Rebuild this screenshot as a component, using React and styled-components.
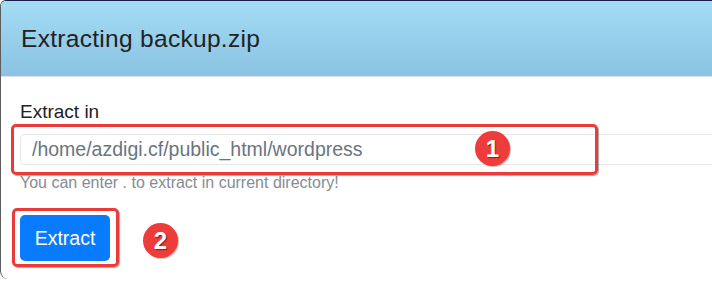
import React from 'react';
import styled, { createGlobalStyle } from 'styled-components';

const GlobalStyle = createGlobalStyle`
  html, body {
    margin: 0;
    padding: 0;
    background: #ffffff;
    overflow: hidden;
  }
  body {
    font-family: "Liberation Sans", Arial, sans-serif;
  }
`;

// the dialog runs off the right side of the capture, so no right border
const Modal = styled.div`
  box-sizing: border-box;
  width: 100%;
  height: 279px;
  background: #fff;
  border-top: 1px solid #1b1d4a;
  border-left: 1px solid #5c5c5c;
  border-radius: 6px 0 0 8px;
  overflow: hidden;
`;

const Header = styled.div`
  height: 75px;
  display: flex;
  align-items: center;
  padding-left: 20px;
  background: linear-gradient(180deg, #a4dcf5 0%, #8ac3e1 100%);
  border-bottom: 1px solid #dfe3e6;
`;

const Title = styled.h5`
  margin: 0;
  font-size: 24.5px;
  font-weight: 400;
  color: #222;
  letter-spacing: 0.3px;
`;

const Body = styled.div`
  display: flex;
  flex-direction: column;
  align-items: flex-start;
  padding: 23px 0 0 19px;
`;

const Label = styled.label`
  font-size: 19px;
  color: #222;
  line-height: 24px;
  margin-bottom: 10px;
`;

// wrapper that carries a red annotation frame and a numbered badge on top
const Marked = styled.div`
  position: relative;
  align-self: ${p => (p.$stretch ? 'stretch' : 'flex-start')};

  &::after {
    content: '';
    position: absolute;
    left: ${p => p.$box[0]}px;
    top: ${p => p.$box[1]}px;
    width: ${p => p.$box[2]}px;
    height: ${p => p.$box[3]}px;
    box-sizing: border-box;
    border: 3px solid #ea3a3a;
    border-radius: 5px;
    box-shadow: 1px 1px 1px rgba(0, 0, 0, 0.35);
    pointer-events: none;
  }
`;

const Input = styled.input`
  box-sizing: border-box;
  width: calc(100% + 40px);
  height: 31px;
  padding: 0 11px;
  border: 1px solid #e6e6e6;
  border-radius: 4px;
  font-family: inherit;
  font-size: 19.5px;
  color: #6a7580;
  background: #fff;
  outline: none;
`;

const Help = styled.small`
  margin-top: 9px;
  font-size: 16px;
  color: #858c93;
  line-height: 18px;
`;

const Actions = styled.div`
  margin-top: 23px;
`;

const Button = styled.button`
  display: block;
  width: 90px;
  height: 46px;
  border: none;
  border-radius: 5px;
  background: #097bfe;
  color: #fff;
  font-family: inherit;
  font-size: 19.5px;
  padding: 0;
`;

const Badge = styled.span`
  position: absolute;
  left: ${p => p.$x}px;
  top: ${p => p.$y}px;
  z-index: 1;
  width: 35px;
  height: 35px;
  border-radius: 50%;
  background: #ee3c3c;
  color: #fff;
  font-family: "Liberation Sans", Arial, sans-serif;
  font-weight: 700;
  font-size: 24px;
  display: flex;
  align-items: center;
  justify-content: center;
  text-shadow: 1px 1px 1px rgba(0, 0, 0, 0.45);
  box-shadow: 1px 1px 1px rgba(80, 50, 20, 0.35);
`;

export default function App() {
  return (
    <>
      <GlobalStyle />
      <Modal>
        <Header>
          <Title>Extracting backup.zip</Title>
        </Header>
        <Body>
          <Label htmlFor="extract-path">Extract in</Label>
          <Marked $stretch $box={[-9, -10, 587, 51]}>
            <Input id="extract-path" defaultValue="/home/azdigi.cf/public_html/wordpress" />
            <Badge $x={455} $y={-3}>1</Badge>
          </Marked>
          <Help>You can enter . to extract in current directory!</Help>
          <Actions>
            <Marked $box={[-8, -7, 107, 59]}>
              <Button>Extract</Button>
              <Badge $x={123} $y={8}>2</Badge>
            </Marked>
          </Actions>
        </Body>
      </Modal>
    </>
  );
}
